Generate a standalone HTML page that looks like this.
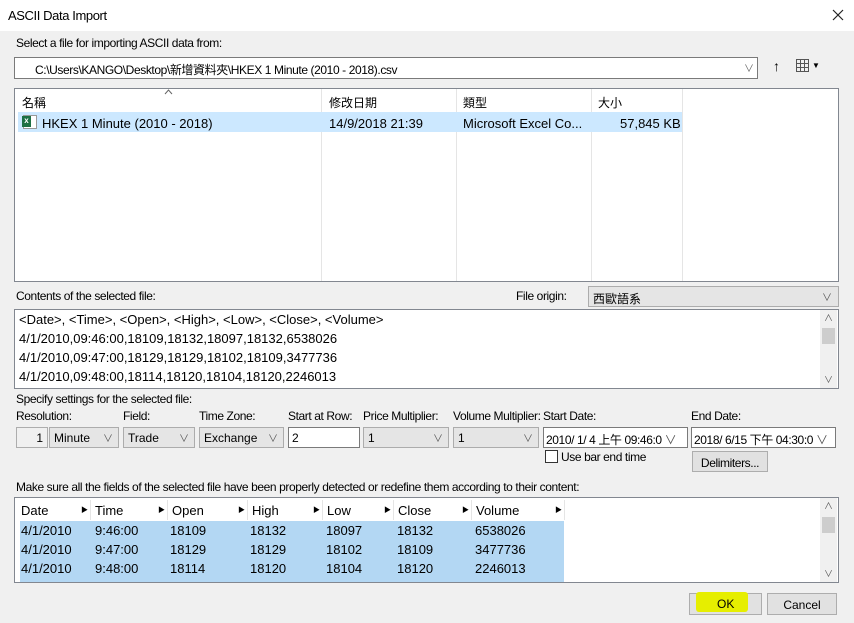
<!DOCTYPE html>
<html><head><meta charset="utf-8"><style>
*{margin:0;padding:0;box-sizing:border-box}
body{width:854px;height:623px;background:#f0f0f0;font-family:"Liberation Sans","Noto Sans CJK TC",sans-serif;font-size:12px;color:#000;position:relative;overflow:hidden}
.a{position:absolute;white-space:nowrap}
.n{letter-spacing:-0.4px}
.box{position:absolute;background:#fff;border:1px solid #828790}
.cb{position:absolute;background:#e5e5e5;border:1px solid #acacac;padding:3px 0 0 4px;white-space:nowrap}
.cb .v{position:absolute;right:5px;top:2px;color:#555;font-size:10px}
.vl{position:absolute;width:1px;background:#e5e5e5}
.sb{position:absolute;width:17px;background:#f0f0f0}
.btn{position:absolute;background:#e1e1e1;border:1px solid #adadad;text-align:center;padding-top:4px}
</style></head><body>
<div class="a" style="left:0;top:0;width:854px;height:31px;background:#fff"></div>
<div class="a n" style="left:8px;top:8px;font-size:13px">ASCII Data Import</div>
<svg class="a" style="left:832px;top:9px" width="12" height="12"><path d="M1 1L11 11M11 1L1 11" stroke="#222" stroke-width="1.2"/></svg>

<div class="a n" style="left:16px;top:36px">Select a file for importing ASCII data from:</div>
<div class="box" style="left:14px;top:57px;width:744px;height:22px;border-color:#7a7a7a"></div>
<div class="a n" style="left:35px;top:61px">C:\Users\KANGO\Desktop\新增資料夾\HKEX 1 Minute (2010 - 2018).csv</div>
<div class="a" style="left:744px;top:60px;color:#666;font-size:10px">∨</div>
<div class="a" style="left:773px;top:58px;font-size:14px">↑</div>
<div class="a" style="left:796px;top:59px;width:13px;height:13px;border:1px solid #555;background:
linear-gradient(#555,#555) 0 3px/100% 1px no-repeat,linear-gradient(#555,#555) 0 7px/100% 1px no-repeat,linear-gradient(#555,#555) 3px 0/1px 100% no-repeat,linear-gradient(#555,#555) 7px 0/1px 100% no-repeat"></div>
<div class="a" style="left:812px;top:61px;font-size:8px">▼</div>

<div class="box" style="left:14px;top:88px;width:825px;height:194px"></div>
<div class="vl" style="left:321px;top:89px;height:192px"></div>
<div class="vl" style="left:456px;top:89px;height:192px"></div>
<div class="vl" style="left:591px;top:89px;height:192px"></div>
<div class="vl" style="left:682px;top:89px;height:192px"></div>
<svg class="a" style="left:164px;top:89px" width="9" height="6"><path d="M1 5L4.5 1L8 5" stroke="#666" fill="none"/></svg>
<div class="a" style="left:22px;top:94px">名稱</div>
<div class="a" style="left:329px;top:94px">修改日期</div>
<div class="a" style="left:463px;top:94px">類型</div>
<div class="a" style="left:598px;top:94px">大小</div>
<div class="a" style="left:18px;top:112px;width:664px;height:20px;background:#cce8ff"></div>
<div class="a" style="left:23px;top:115px;width:14px;height:14px;background:#fff;border:1px solid #999"></div>
<div class="a" style="left:22px;top:116px;width:9px;height:11px;background:#1d7044;color:#fff;font-size:8px;text-align:center;font-weight:bold">x</div>
<div class="a" style="left:42px;top:116px;font-size:13px">HKEX 1 Minute (2010 - 2018)</div>
<div class="a" style="left:329px;top:116px;font-size:13px">14/9/2018 21:39</div>
<div class="a" style="left:463px;top:116px;font-size:13px">Microsoft Excel Co...</div>
<div class="a" style="left:620px;top:116px;font-size:13px">57,845 KB</div>

<div class="a n" style="left:16px;top:289px">Contents of the selected file:</div>
<div class="a n" style="left:516px;top:289px">File origin:</div>
<div class="cb" style="left:588px;top:286px;width:251px;height:21px">西歐語系<span class="v" style="right:6px">∨</span></div>
<div class="box" style="left:14px;top:309px;width:825px;height:80px"></div>
<div class="sb" style="left:820px;top:310px;height:78px"></div>
<div class="a" style="left:822px;top:328px;width:13px;height:16px;background:#cdcdcd"></div>
<div class="a" style="left:824px;top:311px;font-size:9px;color:#555">∧</div>
<div class="a" style="left:824px;top:373px;font-size:9px;color:#555">∨</div>
<div class="a" style="left:19px;top:312px;font-size:13px">&lt;Date&gt;, &lt;Time&gt;, &lt;Open&gt;, &lt;High&gt;, &lt;Low&gt;, &lt;Close&gt;, &lt;Volume&gt;</div>
<div class="a" style="left:19px;top:331px;font-size:13px">4/1/2010,09:46:00,18109,18132,18097,18132,6538026</div>
<div class="a" style="left:19px;top:350px;font-size:13px">4/1/2010,09:47:00,18129,18129,18102,18109,3477736</div>
<div class="a" style="left:19px;top:369px;font-size:13px">4/1/2010,09:48:00,18114,18120,18104,18120,2246013</div>

<div class="a n" style="left:16px;top:392px">Specify settings for the selected file:</div>
<div class="a n" style="left:16px;top:409px">Resolution:</div>
<div class="a n" style="left:123px;top:409px">Field:</div>
<div class="a n" style="left:199px;top:409px">Time Zone:</div>
<div class="a n" style="left:288px;top:409px">Start at Row:</div>
<div class="a n" style="left:363px;top:409px">Price Multiplier:</div>
<div class="a n" style="left:453px;top:409px">Volume Multiplier:</div>
<div class="a n" style="left:543px;top:409px">Start Date:</div>
<div class="a n" style="left:691px;top:409px">End Date:</div>
<div class="box" style="left:16px;top:427px;width:32px;height:21px;background:#f0f0f0;border-color:#adadad;text-align:right;padding:3px 4px 0 0">1</div>
<div class="cb" style="left:49px;top:427px;width:70px;height:21px">Minute<span class="v">∨</span></div>
<div class="cb" style="left:123px;top:427px;width:72px;height:21px">Trade<span class="v">∨</span></div>
<div class="cb" style="left:199px;top:427px;width:85px;height:21px">Exchange<span class="v">∨</span></div>
<div class="box" style="left:288px;top:427px;width:72px;height:21px;border-color:#7a7a7a;padding:3px 0 0 3px">2</div>
<div class="cb" style="left:363px;top:427px;width:86px;height:21px">1<span class="v">∨</span></div>
<div class="cb" style="left:453px;top:427px;width:86px;height:21px">1<span class="v">∨</span></div>
<div class="box" style="left:543px;top:427px;width:145px;height:21px;border-color:#7a7a7a;padding:3px 0 0 2px;font-size:12px;letter-spacing:-0.4px;white-space:nowrap;overflow:hidden">2010/ 1/ 4 上午 09:46:0 <span style="color:#555">∨</span></div>
<div class="box" style="left:691px;top:427px;width:145px;height:21px;border-color:#7a7a7a;padding:3px 0 0 2px;font-size:12px;letter-spacing:-0.4px;white-space:nowrap;overflow:hidden">2018/ 6/15 下午 04:30:0 <span style="color:#555">∨</span></div>
<div class="a" style="left:545px;top:450px;width:13px;height:13px;background:#fff;border:1px solid #333"></div>
<div class="a n" style="left:561px;top:450px">Use bar end time</div>
<div class="btn n" style="left:692px;top:451px;width:76px;height:21px">Delimiters...</div>

<div class="a n" style="left:16px;top:480px">Make sure all the fields of the selected file have been properly detected or redefine them according to their content:</div>
<div class="box" style="left:14px;top:497px;width:825px;height:86px"></div>
<div class="sb" style="left:820px;top:498px;height:84px"></div>
<div class="a" style="left:822px;top:517px;width:13px;height:16px;background:#cdcdcd"></div>
<div class="a" style="left:824px;top:499px;font-size:9px;color:#555">∧</div>
<div class="a" style="left:824px;top:567px;font-size:9px;color:#555">∨</div>
<div class="a" style="left:20px;top:521px;width:544px;height:61px;background:#b3d7f3"></div>
<div class="vl" style="left:90px;top:500px;height:20px"></div>
<div class="vl" style="left:167px;top:500px;height:20px"></div>
<div class="vl" style="left:247px;top:500px;height:20px"></div>
<div class="vl" style="left:322px;top:500px;height:20px"></div>
<div class="vl" style="left:393px;top:500px;height:20px"></div>
<div class="vl" style="left:471px;top:500px;height:20px"></div>
<div class="vl" style="left:564px;top:500px;height:20px"></div>
<div style="font-size:13px">
<div class="a" style="left:21px;top:503px">Date</div><div class="a" style="left:81px;top:505px;font-size:7px">▶</div>
<div class="a" style="left:95px;top:503px">Time</div><div class="a" style="left:158px;top:505px;font-size:7px">▶</div>
<div class="a" style="left:172px;top:503px">Open</div><div class="a" style="left:238px;top:505px;font-size:7px">▶</div>
<div class="a" style="left:252px;top:503px">High</div><div class="a" style="left:313px;top:505px;font-size:7px">▶</div>
<div class="a" style="left:327px;top:503px">Low</div><div class="a" style="left:384px;top:505px;font-size:7px">▶</div>
<div class="a" style="left:398px;top:503px">Close</div><div class="a" style="left:462px;top:505px;font-size:7px">▶</div>
<div class="a" style="left:476px;top:503px">Volume</div><div class="a" style="left:555px;top:505px;font-size:7px">▶</div>
<div class="a" style="left:21px;top:523px">4/1/2010</div><div class="a" style="left:95px;top:523px">9:46:00</div><div class="a" style="left:170px;top:523px">18109</div><div class="a" style="left:250px;top:523px">18132</div><div class="a" style="left:326px;top:523px">18097</div><div class="a" style="left:397px;top:523px">18132</div><div class="a" style="left:475px;top:523px">6538026</div>
<div class="a" style="left:21px;top:542px">4/1/2010</div><div class="a" style="left:95px;top:542px">9:47:00</div><div class="a" style="left:170px;top:542px">18129</div><div class="a" style="left:250px;top:542px">18129</div><div class="a" style="left:326px;top:542px">18102</div><div class="a" style="left:397px;top:542px">18109</div><div class="a" style="left:475px;top:542px">3477736</div>
<div class="a" style="left:21px;top:561px">4/1/2010</div><div class="a" style="left:95px;top:561px">9:48:00</div><div class="a" style="left:170px;top:561px">18114</div><div class="a" style="left:250px;top:561px">18120</div><div class="a" style="left:326px;top:561px">18104</div><div class="a" style="left:397px;top:561px">18120</div><div class="a" style="left:475px;top:561px">2246013</div>
</div>

<div class="btn" style="left:689px;top:593px;width:73px;height:22px"></div>
<div class="a" style="left:696px;top:592px;width:52px;height:20px;background:#e6ee00;border-radius:3px"></div>
<div class="a" style="left:717px;top:597px">OK</div>
<div class="btn" style="left:767px;top:593px;width:70px;height:22px">Cancel</div>
</body></html>
